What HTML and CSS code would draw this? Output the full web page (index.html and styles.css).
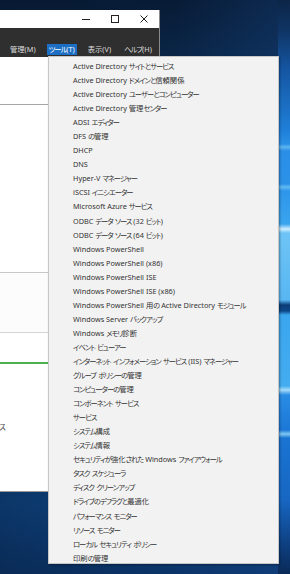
FILE: index.html
```html
<!DOCTYPE html>
<html lang="ja">
<head>
<meta charset="utf-8">
<title>ツール メニュー</title>
<link rel="stylesheet" href="styles.css">
</head>
<body>
<div class="window">
  <div class="titlebar">
    <span class="tb-btn">
      <svg width="9" height="9" viewBox="0 0 9 9"><path d="M0 4.5h8" stroke="#222" stroke-width="1"/></svg>
    </span>
    <span class="tb-btn">
      <svg width="9" height="9" viewBox="0 0 9 9"><rect x="0.5" y="0.5" width="7" height="7" fill="none" stroke="#222" stroke-width="1"/></svg>
    </span>
    <span class="tb-btn">
      <svg width="9" height="9" viewBox="0 0 9 9"><path d="M0.5 0.5l7 7M7.5 0.5l-7 7" stroke="#222" stroke-width="1"/></svg>
    </span>
  </div>
  <div class="menubar">
    <span class="mb-item">管理(M)</span>
    <span class="mb-item active"><span class="k">ツール</span>(T)</span>
    <span class="mb-item">表示(V)</span>
    <span class="mb-item"><span class="k">ヘルプ</span>(H)</span>
  </div>
  <div class="content">
    <div class="pane pane-top"></div>
    <div class="pane pane-mid"></div>
    <div class="pane pane-band"></div>
    <div class="pane pane-gap"></div>
    <div class="pane pane-list"><span class="cut k">ス</span></div>
  </div>
</div>

<ul class="dropdown">
  <li>Active Directory <span class="k">サイトとサービス</span></li>
  <li>Active Directory <span class="k">ドメインと</span>信頼関係</li>
  <li>Active Directory <span class="k">ユーザーとコンピューター</span></li>
  <li>Active Directory 管理<span class="k">センター</span></li>
  <li>ADSI <span class="k">エディター</span></li>
  <li>DFS <span class="k">の</span>管理</li>
  <li>DHCP</li>
  <li>DNS</li>
  <li>Hyper-V <span class="k">マネージャー</span></li>
  <li>iSCSI <span class="k">イニシエーター</span></li>
  <li>Microsoft Azure <span class="k">サービス</span></li>
  <li>ODBC <span class="k">データ ソース</span> (32 <span class="k">ビット</span>)</li>
  <li>ODBC <span class="k">データ ソース</span> (64 <span class="k">ビット</span>)</li>
  <li>Windows PowerShell</li>
  <li>Windows PowerShell (x86)</li>
  <li>Windows PowerShell ISE</li>
  <li>Windows PowerShell ISE (x86)</li>
  <li>Windows PowerShell 用<span class="k">の</span> Active Directory <span class="k">モジュール</span></li>
  <li>Windows Server <span class="k">バックアップ</span></li>
  <li>Windows <span class="k">メモリ</span>診断</li>
  <li><span class="k">イベント ビューアー</span></li>
  <li><span class="k">インターネット インフォメーション サービス</span> (IIS) <span class="k">マネージャー</span></li>
  <li><span class="k">グループ ポリシーの</span>管理</li>
  <li><span class="k">コンピューターの</span>管理</li>
  <li><span class="k">コンポーネント サービス</span></li>
  <li><span class="k">サービス</span></li>
  <li><span class="k">システム</span>構成</li>
  <li><span class="k">システム</span>情報</li>
  <li><span class="k">セキュリティが</span>強化<span class="k">された</span> Windows <span class="k">ファイアウォール</span></li>
  <li><span class="k">タスク スケジューラ</span></li>
  <li><span class="k">ディスク クリーンアップ</span></li>
  <li><span class="k">ドライブのデフラグと</span>最適化</li>
  <li><span class="k">パフォーマンス モニター</span></li>
  <li><span class="k">リソース モニター</span></li>
  <li><span class="k">ローカル セキュリティ ポリシー</span></li>
  <li>印刷<span class="k">の</span>管理</li>
</ul>
</body>
</html>
```
FILE: styles.css
```css
* { box-sizing: border-box; }
html, body { margin: 0; padding: 0; }
body {
  width: 290px;
  height: 574px;
  overflow: hidden;
  position: relative;
  font-family: "Noto Sans", "Noto Sans CJK JP", sans-serif;
  font-feature-settings: "palt";
  background:
    linear-gradient(180deg,
      #0c2547 0px, #0f3464 30px, #1556a3 70px, #1f7fd8 130px,
      #2a90e6 144px, #5eb6f0 147px, #2a8ee6 151px,
      #2b92e8 184px, #62baf2 187px, #2e96ea 191px,
      #3aa4ee 224px, #cfeeff 229px, #6ec4f6 233px,
      #58b6f2 300px, #0b3d78 305px, #0d4888 311px, #3aa6ee 315px,
      #44acf0 386px, #a6dcfa 390px, #2a8ce4 395px,
      #1c78d6 430px, #80c8f4 434px, #1a74d2 438px,
      #1766c2 500px, #0e3f80 545px, #0a2a58 574px) right top / 12px 100% no-repeat,
    linear-gradient(90deg, rgba(8,22,44,0.3) 0%, rgba(8,22,44,0) 60%, rgba(30,90,170,0.25) 100%),
    linear-gradient(180deg, #081b35 0px, #0a2648 60px, #0c3a70 420px, #0d4482 505px, #0b3468 574px);
}

.k { letter-spacing: -1px; word-spacing: 1.4px; }

/* window */
.window {
  margin-top: 10px;
  width: 160px;
  height: 482px;
  background: #ffffff;
  display: flex;
  flex-direction: column;
  border-right: 1px solid #8a8a8a;
}
.titlebar {
  height: 18px;
  display: flex;
  justify-content: flex-end;
  background: #ffffff;
}
.tb-btn {
  width: 29px;
  display: flex;
  align-items: center;
  justify-content: center;
}
.menubar {
  height: 29px;
  background: #2f2f2f;
  display: flex;
  align-items: flex-end;
  padding: 0 0 2px 8px;
  gap: 9px;
}
.mb-item {
  font-size: 7.3px;
  line-height: 11px;
  height: 11px;
  color: #dcdcdc;
  padding: 0 2px;
  white-space: nowrap;
}
.mb-item.active {
  background: #1c6fc4;
  color: #ffffff;
}
.content {
  flex: 1;
  display: flex;
  flex-direction: column;
  border-bottom: 1px solid #9a9a9a;
}
.pane-top {
  height: 48px;
  border-bottom: 1px solid #a6a6a6;
}
.pane-mid {
  height: 168px;
  border-bottom: 1px solid #c8c8c8;
}
.pane-band {
  height: 60px;
  background: #fcfcfc;
  border-bottom: 1px solid #d4d4d4;
}
.pane-gap {
  height: 31px;
  border-bottom: 2px solid #4cb04c;
}
.pane-list {
  flex: 1;
  padding-top: 58px;
}
.cut {
  display: block;
  font-size: 7.5px;
  line-height: 10px;
  color: #444;
  margin-left: -1px;
}

/* dropdown overlays the window */
.dropdown {
  position: absolute;
  left: 48px;
  top: 56px;
  width: 231px;
  height: 508px;
  margin: 0;
  padding: 2px 0 0 0;
  list-style: none;
  background: #f2f2f2;
  border: 1px solid #c6c6c6;
  box-shadow: 1px 1px 2px rgba(0,0,0,0.35);
}
.dropdown li {
  height: 14.05px;
  line-height: 14.05px;
  padding-left: 24px;
  font-size: 7.3px;
  color: #333333;
  white-space: nowrap;
}
```
